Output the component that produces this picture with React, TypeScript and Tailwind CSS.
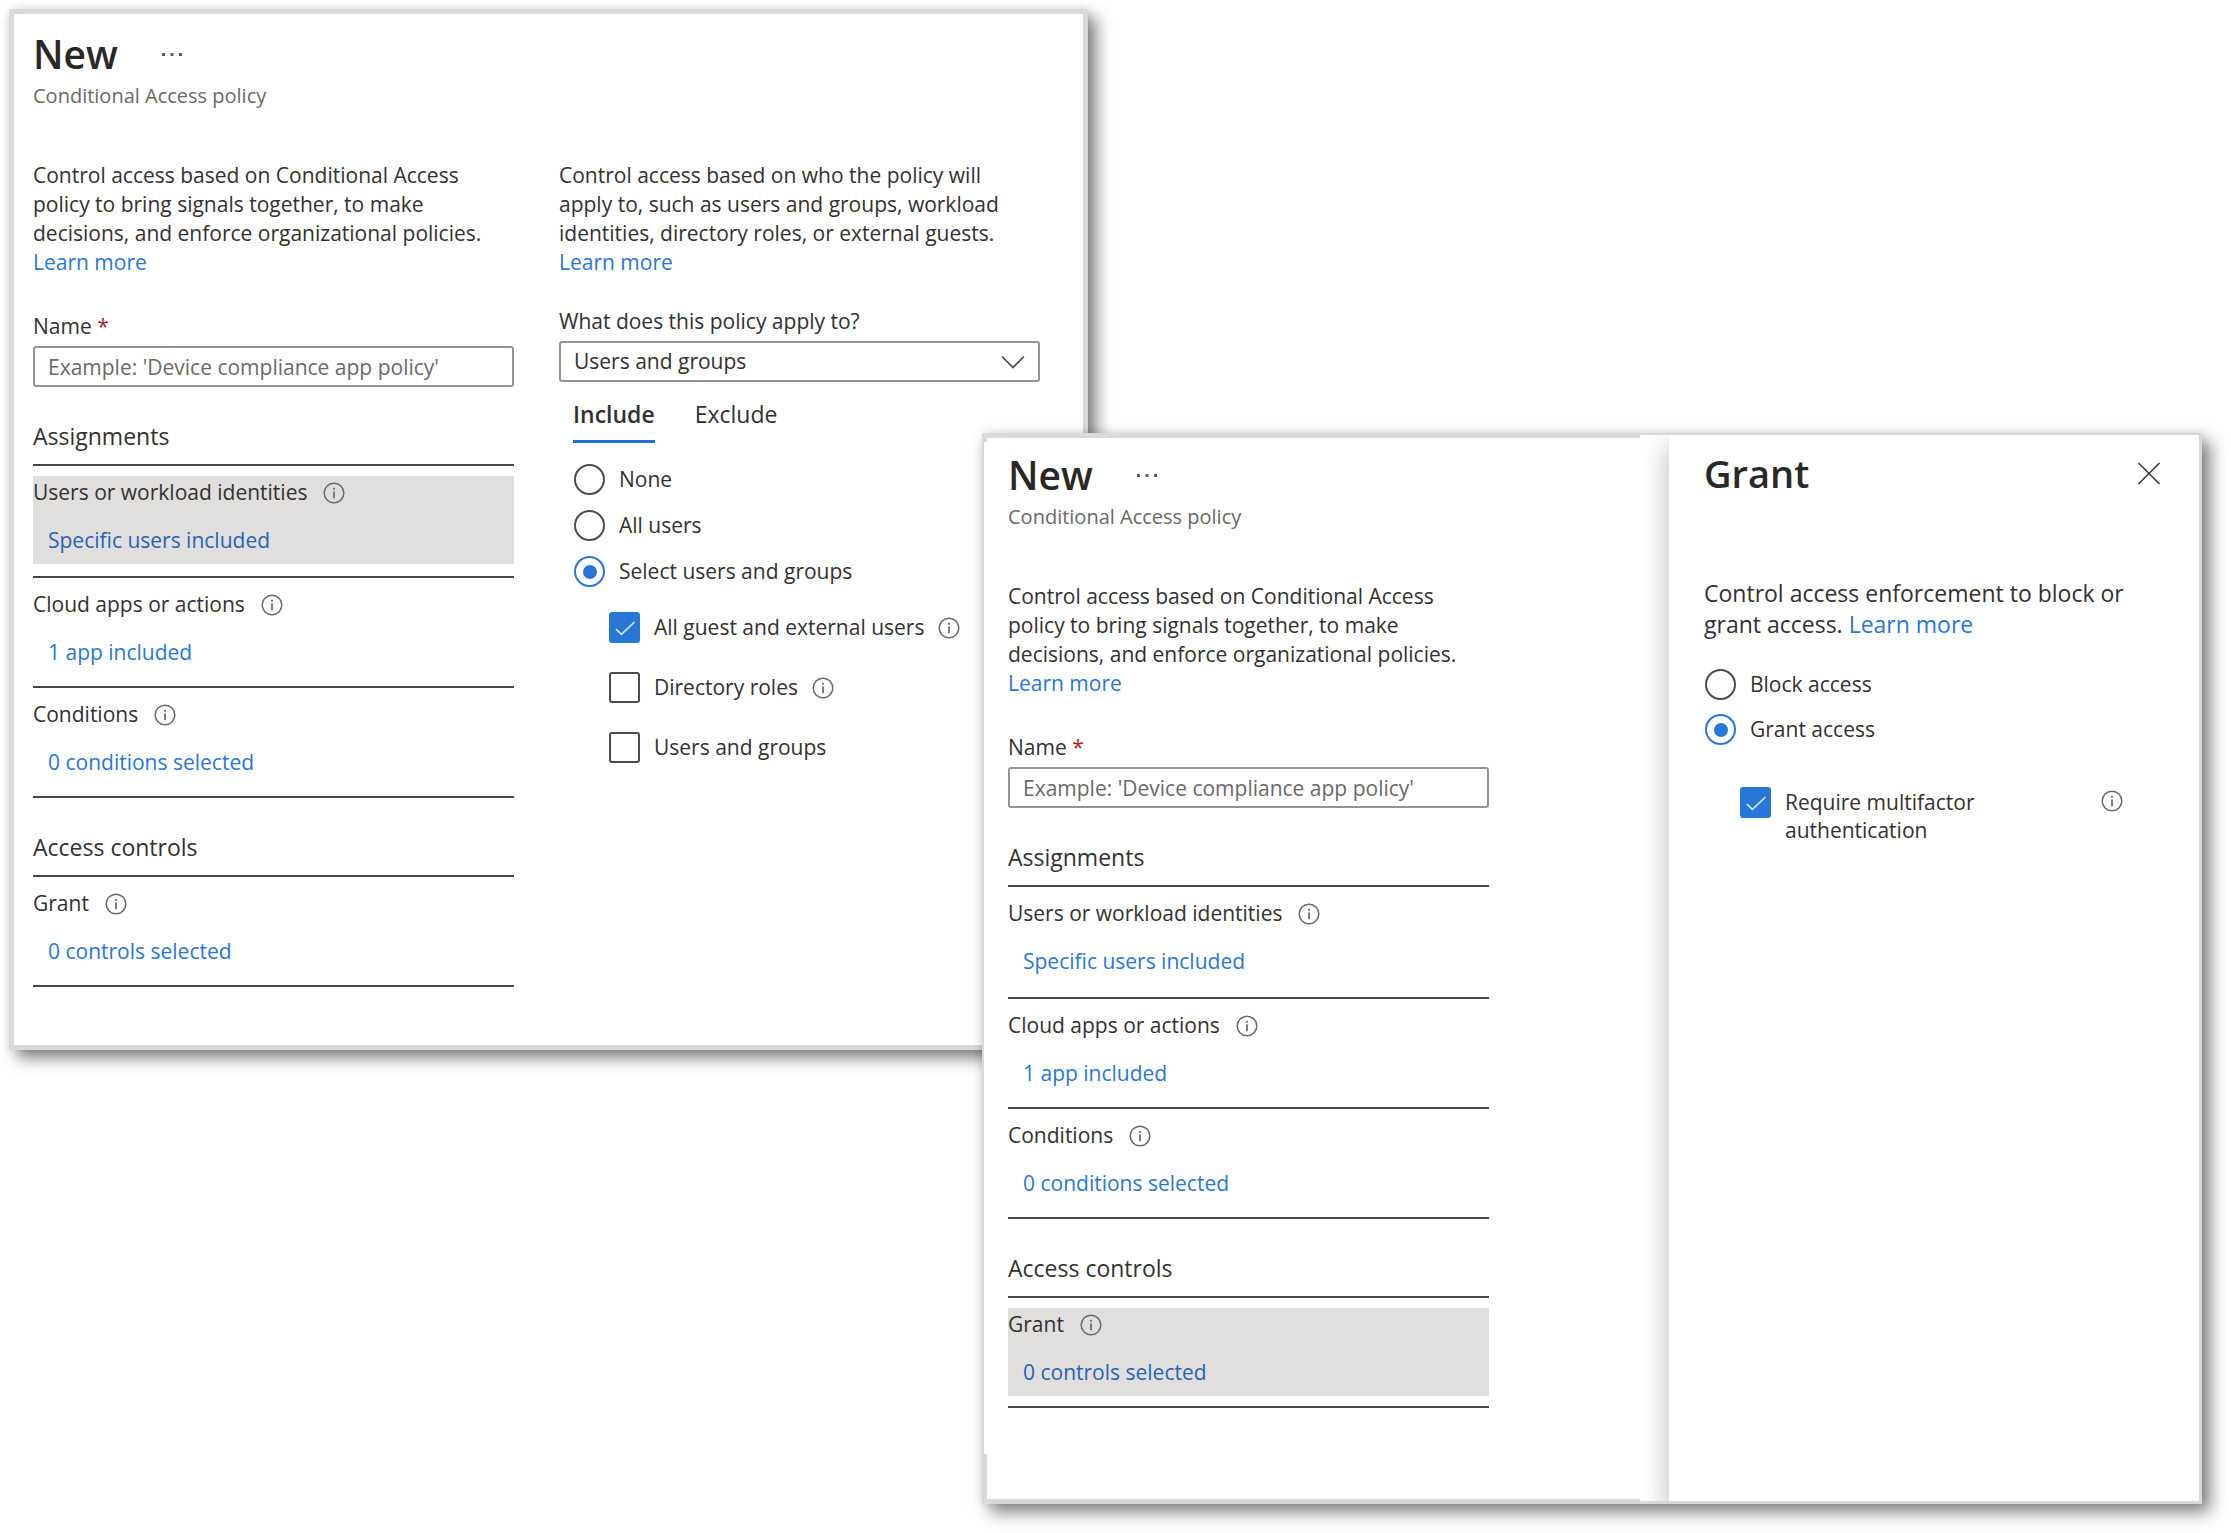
import { useId, useState } from "react";

type Item = { title: string; value: string };

const assignments: Item[] = [
  { title: "Users or workload identities", value: "Specific users included" },
  { title: "Cloud apps or actions", value: "1 app included" },
  { title: "Conditions", value: "0 conditions selected" },
];

const accessControls: Item[] = [{ title: "Grant", value: "0 controls selected" }];

function InfoButton({ label }: { label: string }) {
  return (
    <button type="button" aria-label={`More about ${label}`} className="block shrink-0">
      <svg className="size-[22px]" viewBox="0 0 22 22" fill="none" aria-hidden="true">
        <circle cx="11" cy="11" r="9.8" stroke="#6b6a69" strokeWidth="1.5" />
        <rect x="10" y="9.4" width="2" height="6.8" fill="#7d7c7b" />
        <rect x="10" y="5.8" width="2" height="2" fill="#7d7c7b" />
      </svg>
    </button>
  );
}

function LearnMore() {
  return (
    <a href="#learn-more" className="text-[#2877d7]">
      Learn more
    </a>
  );
}

function PolicyHeader() {
  return (
    <header>
      <div className="flex items-center gap-[43px]">
        <h1 className="text-[39px] leading-[48px] font-semibold text-[#292827]">New</h1>
        <button type="button" aria-label="More options" className="block">
          <svg className="h-4 w-[22px]" viewBox="0 0 22 16" fill="#605e5c" aria-hidden="true">
            <rect x="1" y="7" width="3" height="3" />
            <rect x="9.5" y="7" width="3" height="3" />
            <rect x="18" y="7" width="3" height="3" />
          </svg>
        </button>
      </div>
      <p className="mt-1.5 text-[20px] leading-6 text-[#6b6967]">Conditional Access policy</p>
    </header>
  );
}

function Section({ title, items, selected }: { title: string; items: Item[]; selected: string }) {
  return (
    <section>
      <h2 className="mt-[35px] border-b-2 border-[#484746] pb-[13px] text-[23px] leading-[29px]">{title}</h2>
      <ul>
        {items.map((item) => (
          <li
            key={item.title}
            className="border-b-2 border-[#484746] py-2.5 [&:first-child:not(:last-child)]:pb-3"
          >
            <div className={item.title === selected ? "bg-[#e1dfdd] pt-0.5 pb-[9px]" : "pt-0.5 pb-[9px]"}>
              <div className="flex items-center gap-4">
                <span>{item.title}</span>
                <InfoButton label={item.title} />
              </div>
              <a
                href="#edit"
                className={
                  item.title === selected
                    ? "mt-[19px] ml-[15px] inline-block align-top text-[#2763b5]"
                    : "mt-[19px] ml-[15px] inline-block align-top text-[#2877d7]"
                }
              >
                {item.value}
              </a>
            </div>
          </li>
        ))}
      </ul>
    </section>
  );
}

function PolicyForm({ selected }: { selected: string }) {
  const nameId = useId();
  return (
    <div>
      <p className="pr-4">
        Control access based on Conditional Access policy to bring signals together, to make decisions, and enforce
        organizational policies.
        <br />
        <LearnMore />
      </p>
      <label htmlFor={nameId} className="mt-[35px] block">
        Name <span className="text-[#a4262c]">*</span>
      </label>
      <input
        id={nameId}
        type="text"
        placeholder="Example: 'Device compliance app policy'"
        className="mt-[5px] block h-[41px] w-full rounded-[3px] border-2 border-[#959391] bg-white px-[13px] placeholder:text-[#6b6967]"
      />
      <Section title="Assignments" items={assignments} selected={selected} />
      <Section title="Access controls" items={accessControls} selected={selected} />
    </div>
  );
}

function Radio({
  name,
  label,
  checked,
  onSelect,
}: {
  name: string;
  label: string;
  checked: boolean;
  onSelect: () => void;
}) {
  return (
    <label className="flex items-center gap-3.5">
      <input
        type="radio"
        name={name}
        checked={checked}
        onChange={onSelect}
        className="grid size-[31px] shrink-0 appearance-none place-content-center rounded-full border-2 border-[#4c4b4a] before:size-[14px] before:rounded-full checked:border-[#2877d7] checked:before:bg-[#2877d7]"
      />
      <span>{label}</span>
    </label>
  );
}

function CheckBox({ id, defaultChecked }: { id: string; defaultChecked?: boolean }) {
  return (
    <span className="grid shrink-0 place-items-center">
      <input
        id={id}
        type="checkbox"
        defaultChecked={defaultChecked}
        className="peer col-start-1 row-start-1 size-[31px] appearance-none rounded-[3px] border-2 border-[#4c4b4a] bg-white checked:border-[#2877d7] checked:bg-[#2877d7]"
      />
      <svg
        className="pointer-events-none invisible col-start-1 row-start-1 size-[31px] peer-checked:visible"
        viewBox="0 0 31 31"
        fill="none"
        aria-hidden="true"
      >
        <path d="M7 17.2 L12.4 22.4 L25.5 10" stroke="#d5e6f8" strokeWidth="1.7" />
      </svg>
    </span>
  );
}

function UserScope() {
  const selectId = useId();
  const boxId = useId();
  const [tab, setTab] = useState("Include");
  const [scope, setScope] = useState("Select users and groups");
  const boxes = [
    { label: "All guest and external users", info: true, checked: true },
    { label: "Directory roles", info: true, checked: false },
    { label: "Users and groups", info: false, checked: false },
  ];
  return (
    <div>
      <p className="pr-4">
        Control access based on who the policy will apply to, such as users and groups, workload identities, directory
        roles, or external guests.
        <br />
        <LearnMore />
      </p>
      <label htmlFor={selectId} className="mt-[30px] block">
        What does this policy apply to?
      </label>
      <div className="mt-[5px] grid items-center">
        <select
          id={selectId}
          className="col-start-1 row-start-1 h-[41px] w-full appearance-none rounded-[3px] border-2 border-[#959391] bg-white pr-12 pl-[13px]"
        >
          <option>Users and groups</option>
          <option>Workload identities</option>
        </select>
        <svg
          className="pointer-events-none col-start-1 row-start-1 mr-[15px] h-3.5 w-6 justify-self-end"
          viewBox="0 0 24 14"
          fill="none"
          aria-hidden="true"
        >
          <path d="M1 1.5 L12 12.5 L23 1.5" stroke="#4c4b4a" strokeWidth="1.7" />
        </svg>
      </div>
      <div role="tablist" className="mt-[18px] ml-3.5 flex gap-10">
        {["Include", "Exclude"].map((name) => (
          <button
            key={name}
            type="button"
            role="tab"
            aria-selected={tab === name}
            onClick={() => setTab(name)}
            className="border-b-3 border-transparent pb-[11px] text-[23px] leading-[29px] aria-selected:border-[#1f70d6] aria-selected:font-semibold"
          >
            {name}
          </button>
        ))}
      </div>
      <div className="mt-[21px] ml-[15px] flex flex-col gap-[15px]">
        {["None", "All users", "Select users and groups"].map((name) => (
          <Radio key={name} name="scope" label={name} checked={scope === name} onSelect={() => setScope(name)} />
        ))}
      </div>
      <div className="mt-[25px] ml-[50px] flex flex-col gap-[29px]">
        {boxes.map((box, index) => (
          <div key={box.label} className="flex items-center gap-3.5">
            <CheckBox id={`${boxId}-${index}`} defaultChecked={box.checked} />
            <label htmlFor={`${boxId}-${index}`}>{box.label}</label>
            {box.info && <InfoButton label={box.label} />}
          </div>
        ))}
      </div>
    </div>
  );
}

function GrantPane() {
  const mfaId = useId();
  const [access, setAccess] = useState("Grant access");
  return (
    <aside className="bg-white pt-3.5 pr-[38px] pl-[35px] shadow-[-4px_10px_24px_rgba(0,0,0,0.22)]">
      <div className="flex items-center justify-between">
        <h2 className="text-[38px] leading-[48px] font-semibold text-[#292827]">Grant</h2>
        <button type="button" aria-label="Close" className="block">
          <svg className="size-6" viewBox="0 0 24 24" fill="none" aria-hidden="true">
            <path d="M1.5 2 L22.5 23 M22.5 2 L1.5 23" stroke="#3b3a39" strokeWidth="1.6" />
          </svg>
        </button>
      </div>
      <p className="mt-[81px] text-[23px] leading-[31px]">
        Control access enforcement to block or
        <br />
        grant access. <LearnMore />
      </p>
      <div className="mt-[29px] ml-px flex flex-col gap-3.5">
        {["Block access", "Grant access"].map((name) => (
          <Radio key={name} name="access" label={name} checked={access === name} onSelect={() => setAccess(name)} />
        ))}
      </div>
      <div className="mt-[42px] mr-[38px] ml-9 flex items-start gap-3.5">
        <CheckBox id={mfaId} defaultChecked />
        <label htmlFor={mfaId} className="mr-14 flex-1 pt-px leading-[28px]">
          Require multifactor authentication
        </label>
        <div className="pt-[3px]">
          <InfoButton label="multifactor authentication" />
        </div>
      </div>
    </aside>
  );
}

export default function App() {
  return (
    <main className="grid min-h-screen grid-cols-[973fr_106fr_1114fr] items-start bg-white pt-[9px] pr-[29px] pb-[29px] pl-[9px] font-['Open_Sans',sans-serif] text-[21px] leading-[29px] text-[#323130]">
      <section className="col-span-2 col-start-1 row-start-1 rounded-[3px] border-5 border-[#d9d9d9] bg-white pt-4 pr-[43px] pb-[58px] pl-[19px] shadow-[8px_8px_16px_rgba(0,0,0,0.5),0_0_10px_rgba(0,0,0,0.08)]">
        <PolicyHeader />
        <div className="mt-[53px] grid grid-cols-2 gap-[45px]">
          <PolicyForm selected="Users or workload identities" />
          <UserScope />
        </div>
      </section>

      <section className="relative col-span-2 col-start-2 row-start-1 mt-[424px] border-t-2 border-r-3 border-b-3 border-l-2 border-[#d9d9d9] bg-white shadow-[8px_8px_16px_rgba(0,0,0,0.5),0_0_10px_rgba(0,0,0,0.08)]">
        <div className="grid grid-cols-[685fr_530fr] overflow-hidden">
          <div className="pt-4 pr-[180px] pb-[93px] pl-6">
            <PolicyHeader />
            <div className="mt-[53px]">
              <PolicyForm selected="Grant" />
            </div>
          </div>
          <GrantPane />
        </div>
        <div className="absolute top-0 left-0 h-[3px] w-[54%] bg-[#d9d9d9]" />
        <div className="absolute top-0 left-0 h-[7px] w-[3px] bg-[#d9d9d9]" />
        <div className="absolute bottom-0 left-0 h-[47px] w-[3px] bg-[#d9d9d9]" />
        <div className="absolute bottom-0 left-0 h-0.5 w-[54%] bg-[#d9d9d9]" />
      </section>
    </main>
  );
}
